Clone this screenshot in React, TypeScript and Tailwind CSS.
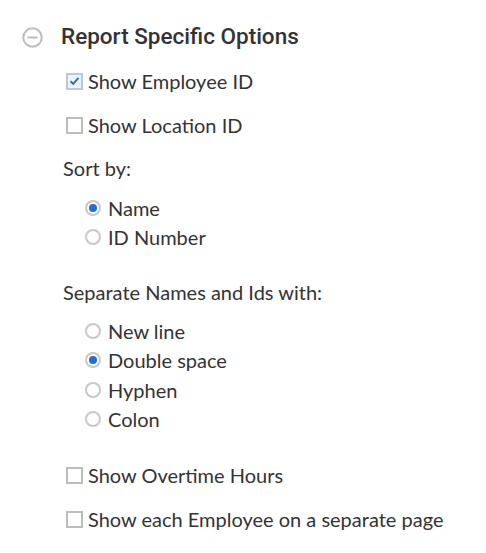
const body = { fontFamily: "Lato, 'Open Sans', sans-serif" };

function Check({ label, checked = false }: { label: string; checked?: boolean }) {
  return (
    <div className="flex h-[44px] items-center">
      <span
        className={
          "mr-[5px] flex h-[17px] w-[17px] items-center justify-center border-2 " +
          (checked ? "border-[#b5c9e6] bg-[#eef3fb]" : "border-[#bdbdbd] bg-white")
        }
      >
        {checked && (
          <svg width="11" height="10" viewBox="0 0 11 10">
            <path d="M1.5 5.2 L4.2 7.8 L9.5 1.8" fill="none" stroke="#2f6fce" strokeWidth="2" />
          </svg>
        )}
      </span>
      <span>{label}</span>
    </div>
  );
}

function Radio({ label, checked = false }: { label: string; checked?: boolean }) {
  return (
    <div className="flex h-[29.5px] items-center">
      <span className="mr-[7px] flex h-[16px] w-[16px] items-center justify-center rounded-full border-2 border-[#c8c8c8] bg-white">
        {checked && <span className="h-[8px] w-[8px] rounded-full bg-[#1f6fd6]" />}
      </span>
      <span>{label}</span>
    </div>
  );
}

export default function App() {
  return (
    <div className="h-[553px] w-[486px] bg-white text-[#333333]">
      <div className="mt-[22px] flex h-[30px] items-center pl-[22px]">
        <svg width="21" height="21" viewBox="0 0 21 21" className="mr-[18px]">
          <circle cx="10.5" cy="10.5" r="9.2" fill="none" stroke="#bdbdbd" strokeWidth="2" />
          <path d="M5.5 10.5 H15.5" stroke="#bdbdbd" strokeWidth="2" />
        </svg>
        <span className="text-[22.5px] font-medium text-[#333333]" style={{ fontFamily: "Roboto, sans-serif" }}>
          Report Specific Options
        </span>
      </div>
      <div className="pl-[66px] pt-[7px] text-[20px]" style={body}>
        <Check label="Show Employee ID" checked />
        <Check label="Show Location ID" />
        <div className="-ml-[3px] flex h-[41px] items-center">Sort by:</div>
        <div className="pl-[19px] pt-[5px]">
          <Radio label="Name" checked />
          <Radio label="ID Number" />
        </div>
        <div className="-ml-[3px] mt-[20px] flex h-[40px] items-center">Separate Names and Ids with:</div>
        <div className="pl-[19px] pt-[4px]">
          <Radio label="New line" />
          <Radio label="Double space" checked />
          <Radio label="Hyphen" />
          <Radio label="Colon" />
        </div>
        <div className="pt-[19px]">
          <Check label="Show Overtime Hours" />
          <Check label="Show each Employee on a separate page" />
        </div>
      </div>
    </div>
  );
}
